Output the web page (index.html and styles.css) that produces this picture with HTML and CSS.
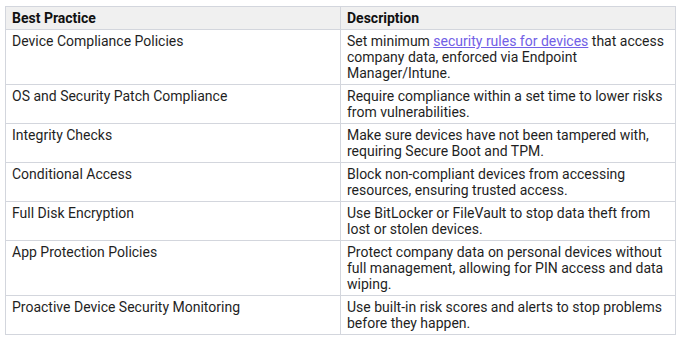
FILE: index.html
```html
<!DOCTYPE html>
<html lang="en">
<head>
    <meta charset="UTF-8">
    <meta name="viewport" content="width=device-width, initial-scale=1.0">
    <title>Best Practices</title>
    <link rel="stylesheet" href="styles.css">
</head>
<body>
    <table class="bp_table">
        <thead>
            <tr>
                <th>Best Practice</th>
                <th>Description</th>
            </tr>
        </thead>
        <tbody>
            <tr>
                <td>Device Compliance Policies</td>
                <td>Set minimum <a href="#">security rules for devices</a> that access company data, enforced via Endpoint Manager/Intune.</td>
            </tr>
            <tr>
                <td>OS and Security Patch Compliance</td>
                <td>Require compliance within a set time to lower risks from vulnerabilities.</td>
            </tr>
            <tr>
                <td>Integrity Checks</td>
                <td>Make sure devices have not been tampered with, requiring Secure Boot and TPM.</td>
            </tr>
            <tr>
                <td>Conditional Access</td>
                <td>Block non-compliant devices from accessing resources, ensuring trusted access.</td>
            </tr>
            <tr>
                <td>Full Disk Encryption</td>
                <td>Use BitLocker or FileVault to stop data theft from lost or stolen devices.</td>
            </tr>
            <tr>
                <td>App Protection Policies</td>
                <td>Protect company data on personal devices without full management, allowing for PIN access and data wiping.</td>
            </tr>
            <tr>
                <td>Proactive Device Security Monitoring</td>
                <td>Use built-in risk scores and alerts to stop problems before they happen.</td>
            </tr>
        </tbody>
    </table>
</body>
</html>
```

FILE: styles.css
```css
*{
    font-family: Roboto, Arial, sans-serif;
}
body{
    margin: 0;
    padding: 6px 9px 0 5px;
    background-color: #fff;
}
.bp_table{
    width: 671px;
    border-collapse: collapse;
    table-layout: fixed;
    font-size: 14px;
    line-height: 16px;
    color: #1f1f1f;
}
.bp_table th,
.bp_table td{
    border: 1px solid #d3d6dd;
    padding: 3px 6px 3px 6px;
    text-align: left;
    vertical-align: top;
    width: 50%;
}
.bp_table th{
    background-color: #f0f0f0;
    font-weight: bold;
    color: #111;
}
.bp_table a{
    color: #7260e6;
}
```
